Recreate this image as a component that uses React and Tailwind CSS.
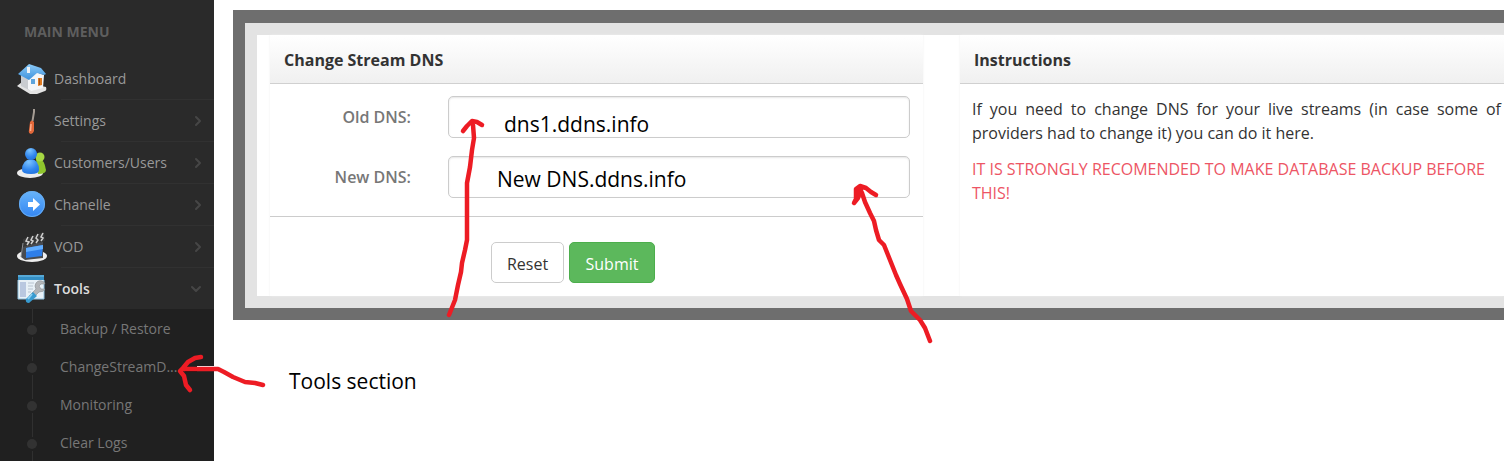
import { ChevronDown, ChevronRight } from 'lucide-react';

const HouseIcon = () => (
  <svg viewBox="0 0 30 30" className="size-[30px] shrink-0" aria-hidden="true">
    <defs>
      <linearGradient id="roof" x1="0" y1="0" x2="0" y2="1">
        <stop offset="0" stopColor="#8ccbf8" />
        <stop offset="1" stopColor="#3d91dc" />
      </linearGradient>
    </defs>
    <path d="M0 22 L5 18 L29 23 Q30 26 28 27 L20 30 L13 30 Z" fill="#e3e3e3" />
    <path d="M4 10 L14 15 L14 27 L4 22 Z" fill="#c9ccd0" />
    <path d="M11 16 L19 8 L27 11 L26 24 L14 27 L11 25 Z" fill="#f5f6f8" />
    <path d="M12 0 L24 4 L29 10 L27 11 L20 9 L12 16 L1 10 Z" fill="url(#roof)" />
    <path d="M10 3 L13 3 L13 9 L10 9 Z" fill="#eef3f8" />
    <path d="M14 15 L18 15 L18 20 L14 20 Z" fill="#5ea4dc" />
    <path d="M21 14 L25 14 L25 21 L21 22 Z" fill="#e07b22" />
    <path d="M22.500 14.500 V21" stroke="#a95412" />
  </svg>
);

const ScrewdriverIcon = () => (
  <svg viewBox="0 0 30 30" className="size-[30px] shrink-0" aria-hidden="true">
    <path d="M16 3 L18 3 L18 6 L16.500 15 L14.500 15 L16 6 Z" fill="#a59c94" />
    <path d="M13 16 Q15 13 17 16 L17 25 Q16 28 14 28 Q11 27 12 24 Z" fill="#e2683a" />
    <path d="M14 18 L13.500 25" stroke="#ffae8b" strokeWidth="1.500" />
  </svg>
);

const UsersIcon = () => (
  <svg viewBox="0 0 30 30" className="size-[30px] shrink-0" aria-hidden="true">
    <defs>
      <radialGradient id="person" cx=".4" cy=".2" r=".9">
        <stop offset="0" stopColor="#7cc4ff" />
        <stop offset=".6" stopColor="#3186ed" />
        <stop offset="1" stopColor="#1e6fdc" />
      </radialGradient>
    </defs>
    <ellipse cx="13" cy="25" rx="13" ry="5" fill="#ececec" />
    <path d="M19 11 Q27 9 29 22 Q29 26 21 26 Z" fill="#8fc52d" />
    <circle cx="23" cy="9" r="4.500" fill="#a6d743" />
    <path d="M5 22 Q5 12 14 11 Q22 12 22 22 Q22 26 14 26 Q5 26 5 22 Z" fill="url(#person)" />
    <circle cx="14" cy="6" r="6" fill="url(#person)" />
  </svg>
);

const ArrowIcon = () => (
  <svg viewBox="0 0 30 30" className="size-[30px] shrink-0" aria-hidden="true">
    <defs>
      <linearGradient id="disc" x1="0" y1="0" x2="0" y2="1">
        <stop offset="0" stopColor="#67b4fb" />
        <stop offset="1" stopColor="#3486f2" />
      </linearGradient>
    </defs>
    <circle cx="15" cy="14" r="13" fill="url(#disc)" />
    <circle cx="15" cy="14" r="12.500" fill="none" stroke="#69adf0" />
    <path d="M11 12 H16 V8 L23 14.500 L16 21 V17 H11 Z" fill="#fff" />
  </svg>
);

const ClapperIcon = () => (
  <svg viewBox="0 0 30 30" className="size-[30px] shrink-0" aria-hidden="true">
    <ellipse cx="15" cy="24" rx="15" ry="6" fill="#eeeeee" />
    <path d="M6 11 L26 10 L26 26 L8 28 L4 25 Z" fill="#484b50" />
    <path d="M6 7 L27 0 L28 9 L6 15 Z" fill="#383838" />
    <path d="M11 5 L9 9 L12 10 L10 13 M16 4 L14 8 L16 9 L14 12 M21 2 L19 6 L21 8 L19 11 M26 1 L24 5 L26 6 L24 9" fill="none" stroke="#d0d0d0" strokeWidth="1.500" />
    <path d="M6 11 L4 25" stroke="#8b8e93" />
    <path d="M9 16 L26 13 L25 24 L9 26 Z" fill="#2d7eea" />
    <path d="M9 16 L26 13 L26 17 L9 20 Z" fill="#61adff" />
  </svg>
);

const ToolsIcon = () => (
  <svg viewBox="0 0 30 30" className="size-[30px] shrink-0" aria-hidden="true">
    <path d="M1 1 H27 V25 H1 Z" fill="#e8f1f7" />
    <path d="M1 1 H27 V6 H1 Z" fill="#348fc5" />
    <path d="M1 2 H27" stroke="#79c2e8" />
    <path d="M1 6 V25 H27 V6" fill="none" stroke="#8fc1df" />
    <path d="M3 8 H9 V23 H3 Z" fill="#b9c8e0" />
    <path d="M11 9 H17 M11 12 H16 M11 15 H16 M11 18 H14" stroke="#b8c4d0" />
    <path d="M27 8 Q22 5 19 9 Q17 12 19 15 L12 22 L15 25 L22 18 Q27 18 28 15 L24 15 L22 12 L24 10 L28 10 Z" fill="#b2b5b8" stroke="#8c9094" strokeWidth=".6" />
    <path d="M16 18 L20 22 L12 29 Q8 29 9 25 Z" fill="#389bd0" />
    <path d="M15 20 L11 25" stroke="#8dd0f1" strokeWidth="2" />
  </svg>
);

const menu = [
  { label: 'Dashboard', Icon: HouseIcon },
  { label: 'Settings', Icon: ScrewdriverIcon, nested: true },
  { label: 'Customers/Users', Icon: UsersIcon, nested: true },
  { label: 'Chanelle', Icon: ArrowIcon, nested: true },
  { label: 'VOD', Icon: ClapperIcon, nested: true },
];

const toolLinks = ['Backup / Restore', 'ChangeStreamD...', 'Monitoring', 'Clear Logs'];

const Sidebar = () => (
  <nav className="w-[214px] shrink-0 self-start bg-[#2a2a2a] text-sm text-[#999]">
    <h2 className="flex h-[58px] items-center pl-6 pt-[6px] text-sm font-bold text-[#5e5e5e]">MAIN MENU</h2>
    <ul>
      {menu.map(({ label, Icon, nested }) => (
        <li key={label}>
          <a href="#" className="flex h-[41px] items-center gap-[7px] pl-[17px] pr-2">
            <Icon />
            <span className="flex-1">{label}</span>
            {nested && <ChevronRight size={16} strokeWidth={3} className="text-[#464646]" />}
          </a>
          <div className="ml-[61px] h-px bg-[#313131]" />
        </li>
      ))}
      <li>
        <a href="#" className="flex h-[41px] items-center gap-[7px] pl-[17px] pr-[10px] font-semibold text-[#dcdcdc]">
          <ToolsIcon />
          <span className="flex-1">Tools</span>
          <ChevronDown size={16} strokeWidth={3} className="text-[#464646]" />
        </a>
        <ul className="bg-[#202020] text-[#777]">
          {toolLinks.map((label) => (
            <li key={label}>
              <a href="#" className="flex h-[38px] items-center gap-[23px] pl-[27px]">
                <span className="flex h-full w-[10px] flex-col items-center">
                  <span className="h-[14px] w-px bg-[#303030]" />
                  <span className="my-[2px] size-[10px] rounded-full bg-[#323232]" />
                  <span className="w-px flex-1 bg-[#303030]" />
                </span>
                <span className="pt-[2px]">{label}</span>
              </a>
            </li>
          ))}
        </ul>
      </li>
    </ul>
  </nav>
);

const Panel = ({ title, children }) => (
  <section className="min-w-0 shadow-[0_0_2px_#eeeeee]">
    <h3 className="flex h-[49px] items-center border-b border-[#d0d0d0] bg-linear-to-b from-white to-[#f0f0f0] pl-[14px] pt-[2px] text-base font-bold text-[#333]">
      {title}
    </h3>
    {children}
  </section>
);

const inputClass =
  'h-[42px] min-w-0 flex-1 rounded-[5px] border border-[#ccc] bg-white text-[21px] text-black shadow-[inset_0_1px_2px_rgba(0,0,0,0.1)] outline-none';
const labelClass = 'w-[141px] shrink-0 text-right text-base font-semibold text-[#777]';

const DnsForm = () => (
  <form onSubmit={(e) => e.preventDefault()}>
    <div className="flex flex-col gap-[18px] pb-[18px] pr-[13px] pt-3">
      <div className="flex items-center gap-[37px]">
        <label htmlFor="old-dns" className={labelClass}>Old DNS:</label>
        <input id="old-dns" type="text" defaultValue="dns1.ddns.info" className={`${inputClass} pl-[55px] pt-[14px]`} />
      </div>
      <div className="flex items-center gap-[37px]">
        <label htmlFor="new-dns" className={labelClass}>New DNS:</label>
        <input id="new-dns" type="text" defaultValue="New DNS.ddns.info" className={`${inputClass} pl-12 pt-1`} />
      </div>
    </div>
    <div className="flex gap-[5px] border-t border-[#ccc] pb-[13px] pl-[221px] pt-[25px]">
      <button type="reset" className="h-[41px] w-[73px] rounded-[5px] border border-[#ccc] bg-white pt-[2px] text-base text-[#333]">Reset</button>
      <button type="submit" className="h-[41px] w-[86px] rounded-[5px] border border-[#4cae4c] bg-[#5cb85c] pt-[2px] text-base text-white">Submit</button>
    </div>
  </form>
);

// Hand-drawn arrows that sit over the page
const Arrows = () => (
  <svg width="1504" height="464" className="pointer-events-none absolute left-0 top-0" fill="none" stroke="#ed1c24" strokeWidth="4.500" strokeLinecap="round" strokeLinejoin="round" aria-hidden="true">
    <path d="M449 315 L455 300 L458 285 L461 272 L462 263 L465 250 L467 240 V183 L470 167 L472 150 L474 138 L473 125" />
    <path d="M463 131 L467 126 L472 121 L477 122 L482 125" />
    <path d="M930 341 L925 328 L920 320 L911 311 L907 299 L900 284 L896 275 L888 255 L884 245 L879 240 L876 230 L874 221 L870 213 L865 202 L862 193 L859 188" />
    <path d="M876 195 L871 192 L866 188 L860 186 L856 189 L856 199 L854 203 L858 198 L861 190" />
    <path d="M197 366.500 H214" stroke="#fff" strokeWidth="1" strokeLinecap="butt" />
    <path d="M185 370.500 H197" stroke="#000" strokeWidth="2" strokeLinecap="butt" />
    <path d="M263 385 L255 383 L245 382 L233 377 L224 372 L218 369 H184" />
    <path d="M201 357 L195 358 L188 362 L183 368 L180 371 L184 376 L186 385 L190 390" />
  </svg>
);

export default function App() {
  return (
    <div className="relative flex overflow-hidden bg-white font-['Open_Sans','Noto_Sans',sans-serif]">
      <Sidebar />
      <main className="min-w-0 flex-1 pl-[19px] pt-[10px]">
        <div className="border-y-[12px] border-l-[12px] border-t-[13px] border-[#6e6e6e]">
          <div className="border-y-[12px] border-l-[12px] border-[#e3e3e3]">
            <div className="grid grid-cols-[653fr_544fr] gap-[37px] bg-white pl-[13px]">
              <Panel title="Change Stream DNS">
                <DnsForm />
              </Panel>
              <Panel title="Instructions">
                <div className="flex flex-col gap-3 pl-3 pr-[3px] pt-[13px] text-base leading-6">
                  <p className="text-justify text-[#333]">
                    If you need to change DNS for your live streams (in case some of providers had to change it) you can do it here.
                  </p>
                  <p className="text-[#ed5565]">IT IS STRONGLY RECOMENDED TO MAKE DATABASE BACKUP BEFORE THIS!</p>
                </div>
              </Panel>
            </div>
          </div>
        </div>
        <p className="pl-14 pt-[46px] text-[21px] leading-[30px] text-black">Tools section</p>
      </main>
      <Arrows />
    </div>
  );
}
